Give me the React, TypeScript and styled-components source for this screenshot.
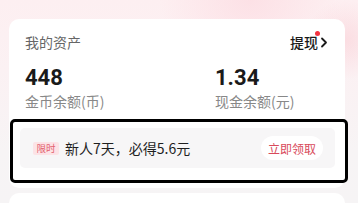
import React from "react";
import styled, { createGlobalStyle } from "styled-components";

const GlobalStyle = createGlobalStyle`
  html, body {
    margin: 0;
    padding: 0;
  }
  body {
    width: 358px;
    height: 203px;
    overflow: hidden;
    font-family: "Noto Sans CJK SC", "Noto Sans", sans-serif;
    background:
      radial-gradient(circle at 345px 40px, rgba(250, 205, 212, 0.55) 0, rgba(250, 205, 212, 0) 40px),
      radial-gradient(ellipse at 250px 0px, rgba(252, 215, 222, 0.6) 0, rgba(252, 215, 222, 0) 90px),
      linear-gradient(180deg, #fdeff1 0, #fbf1f3 70px, #f7f4f5 150px, #f6f4f5 100%);
  }
`;

const Page = styled.div`
  display: flex;
  flex-direction: column;
  gap: 5px;
  height: 203px;
  overflow: hidden;
  box-sizing: border-box;
  padding: 19px 13px 0 9px;
`;

const Card = styled.div`
  background: #fff;
  border-radius: 10px;
  padding: 13px 16px 2px 16px;
`;

const Header = styled.div`
  display: flex;
  justify-content: space-between;
  align-items: center;
  height: 20px;
`;

const Title = styled.span`
  font-size: 14px;
  line-height: 20px;
  color: #666;
`;

const Withdraw = styled.a`
  position: relative;
  display: flex;
  align-items: center;
  gap: 2px;
  margin-right: 1px;
  font-size: 14px;
  font-weight: 500;
  line-height: 20px;
  color: #1a1a1a;
`;

const Dot = styled.span`
  position: absolute;
  top: -1px;
  left: 25px;
  width: 5px;
  height: 5px;
  border-radius: 50%;
  background: #f2323f;
`;

const Stats = styled.div`
  display: grid;
  grid-template-columns: 190px 1fr;
  margin-top: 13px;
`;

const Stat = styled.div`
  display: flex;
  flex-direction: column;
`;

const Value = styled.span`
  font-family: Roboto, "Liberation Sans", sans-serif;
  font-weight: 700;
  font-size: 22px;
  line-height: 26px;
  color: #1a1a1a;
`;

const Label = styled.span`
  font-size: 14px;
  line-height: 20px;
  color: #888;
`;

const Highlight = styled.div`
  margin: 8px -19px 3px -15px;
  border: 3px solid #000;
  border-radius: 5px;
  padding: 6px 10px 12px 7px;
`;

const Banner = styled.div`
  display: flex;
  align-items: center;
  height: 40px;
  padding: 0 12px 0 13px;
  background: #f7f6f7;
  border-radius: 5px;
`;

const Tag = styled.span`
  display: inline-flex;
  align-items: center;
  justify-content: center;
  width: 26px;
  height: 13px;
  border-radius: 2px;
  background: #fce3e6;
  color: #e36270;
  font-size: 9.5px;
  line-height: 13px;
`;

const Offer = styled.span`
  margin-left: 6px;
  flex: 1;
  font-size: 14px;
  line-height: 20px;
  color: #1f1f1f;
`;

const ClaimButton = styled.button`
  border: none;
  background: #fff;
  border-radius: 12px;
  height: 24px;
  padding: 0 7px;
  font-family: inherit;
  font-size: 12px;
  color: #d84a5b;
`;

const NextCard = styled.div`
  flex: 1;
  background: #fff;
  border-radius: 10px 10px 0 0;
`;

function Chevron() {
  return (
    <svg width="8" height="11" viewBox="0 0 8 11">
      <path d="M2 1.5 L6 5.5 L2 9.5" fill="none" stroke="#1a1a1a" strokeWidth="1.8" strokeLinecap="round" strokeLinejoin="round" />
    </svg>
  );
}

export default function App() {
  return (
    <>
      <GlobalStyle />
      <Page>
        <Card>
          <Header>
            <Title>我的资产</Title>
            <Withdraw>
              提现
              <Dot />
              <Chevron />
            </Withdraw>
          </Header>
          <Stats>
            <Stat>
              <Value>448</Value>
              <Label>金币余额(币)</Label>
            </Stat>
            <Stat>
              <Value>1.34</Value>
              <Label>现金余额(元)</Label>
            </Stat>
          </Stats>
          <Highlight>
            <Banner>
              <Tag>限时</Tag>
              <Offer>新人7天，必得5.6元</Offer>
              <ClaimButton>立即领取</ClaimButton>
            </Banner>
          </Highlight>
        </Card>
        <NextCard />
      </Page>
    </>
  );
}
